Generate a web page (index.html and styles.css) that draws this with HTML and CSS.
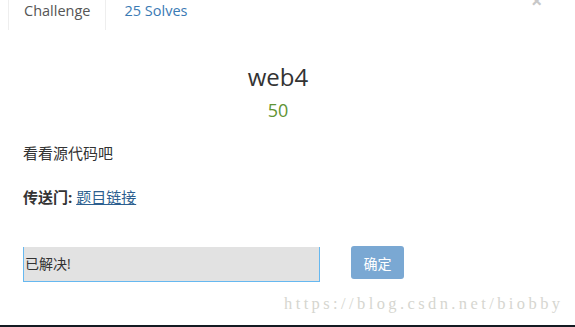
FILE: index.html
```html
<!DOCTYPE html>
<html lang="zh">
<head>
<meta charset="utf-8">
<link rel="stylesheet" href="styles.css">
</head>
<body>
<div class="page">
  <div class="modal">
    <div class="tabs">
      <div class="tab active">Challenge</div>
      <div class="tab link">25 Solves</div>
      <span class="close">×</span>
    </div>
    <div class="content">
      <h1 class="title">web4</h1>
      <div class="points">50</div>
      <p class="desc">看看源代码吧</p>
      <p class="desc"><b>传送门:</b> <a class="chal-link" href="#">题目链接</a></p>
      <form class="submit-row">
        <div class="answer">已解决!</div>
        <button type="button" class="btn">确定</button>
      </form>
    </div>
    <div class="watermark">https://blog.csdn.net/biobby</div>
  </div>
  <div class="bottom-bar"></div>
</div>
</body>
</html>
```
FILE: styles.css
```css
html, body {
  margin: 0;
  padding: 0;
  background: #ffffff;
}
body {
  width: 575px;
  height: 327px;
  overflow: hidden;
  font-family: "Open Sans", "Noto Sans CJK SC", sans-serif;
  color: #333333;
  font-size: 14px;
}
.page {
  display: flex;
  flex-direction: column;
  height: 327px;
}
.modal {
  position: relative;
  flex: 1;
  background: #ffffff;
}
.tabs {
  position: relative;
  display: flex;
  height: 30px;
  padding-left: 8px;
}
.tab {
  padding: 0 15px;
  line-height: 22px;
  font-size: 14.5px;
}
.tab.active {
  border-left: 1px solid #eeeeee;
  border-right: 1px solid #eeeeee;
  color: #555555;
}
.tab.link {
  color: #3a7ab4;
  padding-left: 18px;
}
.close {
  position: absolute;
  left: 531px;
  top: -9px;
  font-size: 20px;
  font-weight: bold;
  color: #c8c8c8;
  line-height: 20px;
}
.content {
  width: 510px;
  padding: 0 23px;
}
.title {
  margin: 32px 0 0 0;
  text-align: center;
  font-size: 24px;
  font-weight: normal;
  line-height: 30px;
  color: #333333;
}
.points {
  text-align: center;
  font-size: 18px;
  line-height: 24px;
  color: #5f9434;
  margin-top: 6px;
}
.desc {
  margin: 21px 0 0 0;
  font-size: 15px;
  line-height: 21px;
}
.desc + .desc {
  margin-top: 23px;
}
.desc b {
  font-weight: bold;
}
.chal-link {
  color: #2d5f8f;
  text-decoration: underline;
}
.submit-row {
  display: flex;
  align-items: flex-start;
  gap: 31px;
  margin-top: 39px;
}
.answer {
  box-sizing: border-box;
  width: 297px;
  height: 35px;
  background: #e2e2e2;
  border: 1px solid #66b8f0;
  border-top: none;
  padding-left: 1px;
  line-height: 34px;
  font-size: 14px;
  color: #333333;
}
.btn {
  width: 53px;
  height: 33px;
  border: none;
  border-radius: 3px;
  background: #7aa8d3;
  color: #ffffff;
  font-family: "Noto Sans CJK SC", sans-serif;
  font-size: 14px;
  padding: 0;
  margin-top: -1px;
}
.watermark {
  position: absolute;
  left: 284px;
  top: 294px;
  font-family: "Liberation Serif", serif;
  font-size: 16.5px;
  letter-spacing: 3.4px;
  line-height: 20px;
  color: #d6d6d0;
  white-space: nowrap;
}
.bottom-bar {
  height: 2px;
  background: #141a22;
}
```
